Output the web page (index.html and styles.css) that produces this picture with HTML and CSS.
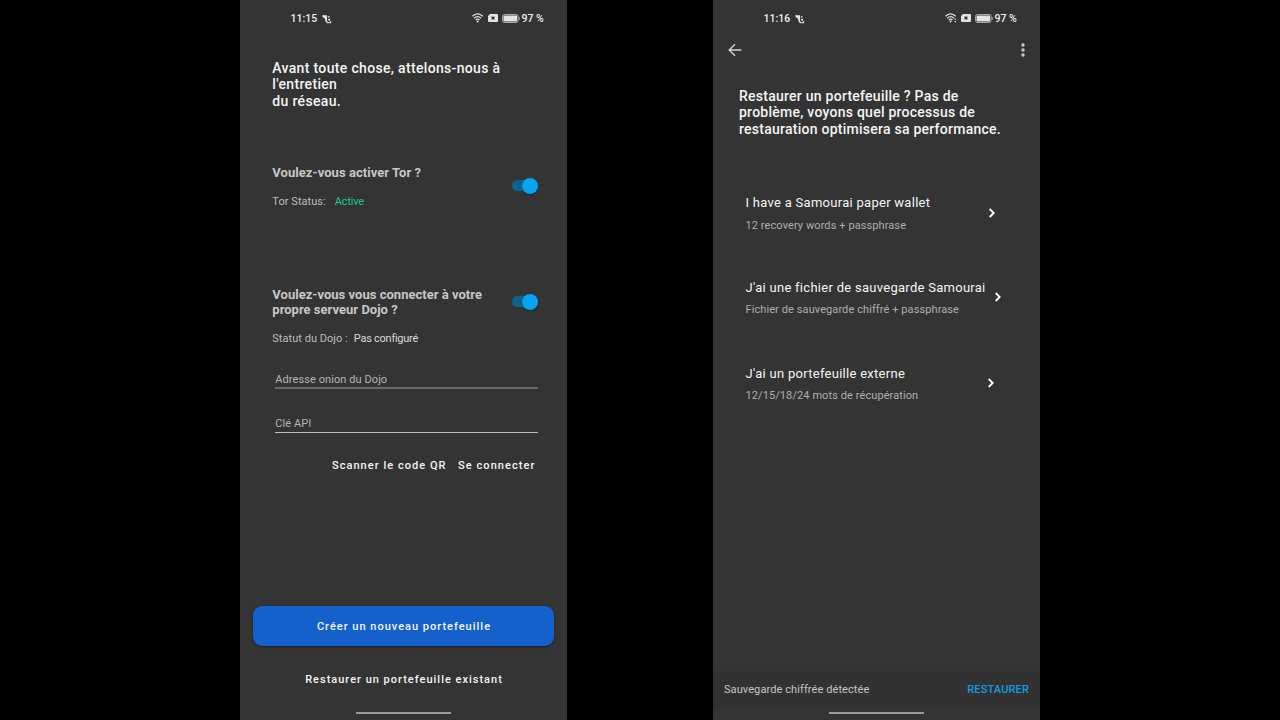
FILE: index.html
```html
<!DOCTYPE html>
<html lang="fr">
<head>
<meta charset="utf-8">
<title>Portefeuille</title>
<link rel="stylesheet" href="styles.css">
</head>
<body>
<svg class="defs" width="0" height="0">
  <symbol id="notif" viewBox="0 0 10 10"><path d="M.3 1.800 1.500.8l1.200.7L4.800 1l.2 2v3.200l.8 2.300H4L3.300 6 2.500 4 .8 3.300z" fill="#e8e8e8"/><path d="M5.800 3.500 7.500 2.200M6 5.600 7.500 5.300 7.300 7M5 8.700h3.600V7" fill="none" stroke="#ccc" stroke-width="1.200"/></symbol>
  <symbol id="wifi" viewBox="0 0 12 10"><path d="M.5 3.300C3.600.2 7.600.2 10.700 3.300M2.200 5.200C4.300 3.200 6.900 3.200 9 5.200M3.800 7C5 5.900 6.200 5.900 7.400 7" fill="none" stroke="#e2e2e2" stroke-width="1.300"/><circle cx="5.600" cy="8.500" r="1" fill="#e2e2e2"/></symbol>
  <symbol id="wifi-active" viewBox="0 0 12 10"><path d="M.5 3.300C3.600.2 7.600.2 10.700 3.300M2.200 5.200C4.300 3.200 6.900 3.200 9 5.200M3.800 7C5 5.900 6.200 5.900 7.400 7" fill="none" stroke="#e2e2e2" stroke-width="1.300"/><circle cx="5.600" cy="8.500" r="1" fill="#e2e2e2"/><path d="M10.300 5.500v1.300M10.300 8v1.300" stroke="#ddd" stroke-width="1.400"/></symbol>
  <symbol id="sim" viewBox="0 0 10 8"><path d="M2 0H9a1 1 0 0 1 1 1v6a1 1 0 0 1-1 1H1a1 1 0 0 1-1-1V2z" fill="#e2e2e2"/><path d="M3.600 2.600 6.400 5.400M6.400 2.600 3.600 5.400" stroke="#222" stroke-width="1.200"/></symbol>
  <symbol id="battery" viewBox="0 0 18 9"><rect x=".5" y=".5" width="15.600" height="8" rx="2" fill="none" stroke="#a8a8a8"/><rect x="1.500" y="1.500" width="13.600" height="6" rx=".8" fill="#e4e4e4"/><path d="M17.200 3v3" stroke="#a8a8a8"/></symbol>
  <symbol id="chevron" viewBox="0 0 8 10"><path d="m1.700 1 4 4-4 4" fill="none" stroke="#fff" stroke-width="1.800"/></symbol>
</svg>
<main class="screens">
  <section class="phone">
    <header class="status">
      <span class="clock">11:15</span><svg class="notif"><use href="#notif"/></svg>
      <svg class="wifi"><use href="#wifi"/></svg><svg class="sim"><use href="#sim"/></svg><svg class="battery"><use href="#battery"/></svg><span class="percent">97 %</span>
    </header>
    <h1 class="title title-setup">Avant toute chose, attelons-nous à<br>l'entretien<br>du réseau.</h1>
    <div class="option option-tor">
      <div><h2 class="question q-tor">Voulez-vous activer Tor ?</h2>
      <p class="state"><span class="state-tor">Tor Status:</span><span class="active">Active</span></p></div>
      <span class="switch"><span class="thumb"></span></span>
    </div>
    <div class="option option-dojo">
      <div><h2 class="question q-dojo">Voulez-vous vous connecter à votre<br>propre serveur Dojo ?</h2>
      <p class="state"><span class="state-label">Statut du Dojo :</span><span class="unset">Pas configuré</span></p></div>
      <span class="switch"><span class="thumb"></span></span>
    </div>
    <div class="field field-dim">Adresse onion du Dojo</div>
    <div class="field">Clé API</div>
    <div class="actions"><span class="scan">Scanner le code QR</span><span class="connect">Se connecter</span></div>
    <div class="primary">Créer un nouveau portefeuille</div>
    <div class="secondary">Restaurer un portefeuille existant</div>
    <div class="home"></div>
  </section>
  <section class="phone">
    <header class="status">
      <span class="clock">11:16</span><svg class="notif"><use href="#notif"/></svg>
      <svg class="wifi"><use href="#wifi-active"/></svg><svg class="sim"><use href="#sim"/></svg><svg class="battery"><use href="#battery"/></svg><span class="percent">97 %</span>
    </header>
    <nav class="toolbar">
      <svg width="14" height="14" viewBox="0 0 14 14"><path d="M13.300 7H1.300M7 1.200 1.200 7 7 12.800" fill="none" stroke="#d0d0d0" stroke-width="1.500"/></svg>
      <svg width="4" height="14" viewBox="0 0 4 14"><g fill="#ccc"><circle cx="2" cy="2" r="1.700"/><circle cx="2" cy="7" r="1.700"/><circle cx="2" cy="12" r="1.700"/></g></svg>
    </nav>
    <h1 class="title title-restore">Restaurer un portefeuille ? Pas de<br>problème, voyons quel processus de<br>restauration optimisera sa performance.</h1>
    <div class="row row-paper"><div><h3 class="name">I have a Samourai paper wallet</h3><p class="hint">12 recovery words + passphrase</p></div><svg class="chevron"><use href="#chevron"/></svg></div>
    <div class="row row-file"><div><h3 class="name">J'ai une fichier de sauvegarde Samourai</h3><p class="hint">Fichier de sauvegarde chiffré + passphrase</p></div><svg class="chevron"><use href="#chevron"/></svg></div>
    <div class="row row-external"><div><h3 class="name">J'ai un portefeuille externe</h3><p class="hint">12/15/18/24 mots de récupération</p></div><svg class="chevron"><use href="#chevron"/></svg></div>
    <footer class="snackbar"><span class="message">Sauvegarde chiffrée détectée</span><span class="restore">RESTAURER</span></footer>
    <div class="home"></div>
  </section>
</main>
</body>
</html>
```
FILE: styles.css
```css
* { box-sizing: border-box; }
body { margin: 0; background: #000; color: #f5f5f5; font-family: Roboto, sans-serif; overflow: hidden; }
h1, h2, h3, p { margin: 0; }
.defs { display: block; }
.screens { display: flex; gap: 146px; padding-left: 240px; height: 720px; }
.phone { width: 327px; height: 720px; background: #343434; display: flex; flex-direction: column; white-space: nowrap; }
.status { display: flex; align-items: center; height: 37px; flex: none; padding-left: 50.500px; font-size: 10.500px; line-height: 13px; font-weight: 500; color: #eee; }
.clock { width: 31.500px; }
.notif { width: 10px; height: 10px; margin-top: 1px; }
.wifi { width: 12px; height: 10px; margin-left: 140px; margin-top: -1px; }
.sim { width: 10px; height: 8px; margin-left: 4px; margin-top: -1px; }
.battery { width: 18px; height: 9px; margin-left: 4px; margin-top: -1px; }
.percent { margin-left: 1.500px; }
.title { font-size: 14px; line-height: 16.500px; font-weight: 500; letter-spacing: .25px; height: 49.500px; flex: none; }
.title-setup { margin: 22.600px 0 0 32.300px; letter-spacing: .33px; }
.option { display: flex; justify-content: space-between; padding: 0 28.700px 0 32.300px; flex: none; }
.option-tor { margin-top: 55.900px; height: 122px; }
.option-tor .switch { margin-top: 15.500px; }
.option-dojo { height: 83px; }
.option-dojo .switch { margin-top: 9.500px; }
.question { font-size: 13px; line-height: 15px; font-weight: 700; color: #c7c7c7; }
.q-tor { letter-spacing: .05px; }
.q-dojo { letter-spacing: .02px; }
.state { display: flex; font-size: 11px; line-height: 13px; color: #bdbdbd; margin-top: 15px; }
.state-tor { letter-spacing: .06px; }
.state-label { letter-spacing: .04px; }
.active { color: #1cc78c; margin-left: 9px; letter-spacing: -.2px; }
.unset { color: #d6dade; margin-left: 6px; letter-spacing: -.26px; }
.switch { width: 26px; height: 11px; border-radius: 6px; background: #0d638f; display: flex; justify-content: flex-end; align-items: center; }
.thumb { width: 16px; height: 16px; flex: none; border-radius: 50%; background: #05a4f4; box-shadow: 0 1px 1px rgba(0,0,0,.3); }
.field { margin: 0 29px 0 35.300px; height: 45px; flex: none; padding-top: 29px; font-size: 11px; line-height: 13px; color: #b5b5b5; border-bottom: 1px solid #bebebe; letter-spacing: .08px; }
.field-dim { height: 17px; padding-top: 1px; margin-top: 2px; border-bottom: 2px solid #696969; }
.field + .field { height: 44px; padding-top: 28px; }
.actions { display: flex; justify-content: flex-end; gap: 11.500px; padding-right: 31.500px; margin-top: 26px; font-size: 11px; line-height: 13px; font-weight: 500; letter-spacing: 1px; }
.scan { letter-spacing: 1.040px; }
.connect { letter-spacing: 1.070px; }
.primary { margin: auto 13px 0; height: 40px; flex: none; border-radius: 9px; background: #1561cb; text-align: center; line-height: 41px; font-size: 11px; font-weight: 500; letter-spacing: 1px; padding-left: 1px; box-shadow: 0 1px 2px rgba(0,0,0,.45); }
.secondary { text-align: center; padding-left: 1px; margin-top: 27px; margin-bottom: 26px; line-height: 13px; font-size: 11px; font-weight: 500; letter-spacing: 1px; }
.home { width: 95px; height: 2px; flex: none; background: #9b9b9b; margin: 0 0 6px 116px; }
.toolbar { display: flex; justify-content: space-between; align-items: center; padding: .5px 15.500px 0 15px; height: 26px; flex: none; }
.title-restore { margin: 24.600px 0 0 26px; line-height: 16.600px; }
.row { display: flex; align-items: center; justify-content: space-between; height: 38px; flex: none; padding-left: 32.500px; }
.row-paper { margin-top: 57.400px; padding-right: 44px; }
.row-file { margin-top: 46.500px; padding-right: 38px; }
.row-external { margin-top: 48px; padding-right: 45px; }
.name { font-size: 13px; line-height: 16px; font-weight: 400; letter-spacing: .28px; }
.hint { font-size: 11px; line-height: 13px; color: #afafaf; margin-top: 7.500px; letter-spacing: .09px; }
.chevron { width: 8px; height: 10px; flex: none; margin-bottom: 1px; }
.snackbar { margin-top: auto; height: 38px; flex: none; display: flex; align-items: center; justify-content: space-between; padding: 0 11px; background: #323232; font-size: 11px; color: #c5c5c5; margin-bottom: 4px; }
.message { letter-spacing: .09px; }
.restore { color: #129de3; font-weight: 500; letter-spacing: .15px; }
```
